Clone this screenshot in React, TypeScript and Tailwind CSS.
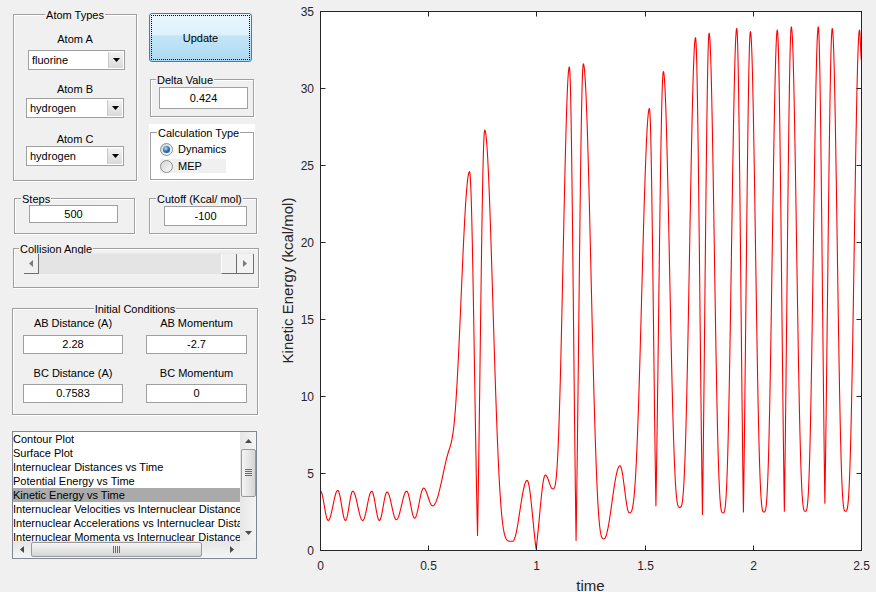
import React from "react";

type Kind = "M" | "m" | "v";
const KEYS: [number, number, Kind, number?][] = [
  [0, 3.85, "M"],
  [0.0355, 1.95, "m"],
  [0.0798, 3.9, "M"],
  [0.1153, 1.95, "m"],
  [0.149, 3.85, "M"],
  [0.195, 1.95, "m"],
  [0.2366, 3.85, "M"],
  [0.272, 1.95, "m"],
  [0.3077, 3.8, "M"],
  [0.3506, 2.0, "m"],
  [0.398, 3.85, "M"],
  [0.435, 2.1, "m"],
  [0.4765, 4.05, "M"],
  [0.518, 2.9, "m"],
  [0.6887, 24.6, "M"],
  [0.7256, 0.97, "v"],
  [0.7588, 27.3, "M", 2.5],
  [0.888, 0.6, "m"],
  [0.9548, 4.55, "M"],
  [0.9963, 0.1, "v"],
  [1.039, 4.9, "M"],
  [1.0733, 4.0, "m"],
  [1.15, 31.4, "M"],
  [1.181, 0.65, "v"],
  [1.2145, 31.6, "M"],
  [1.31, 0.76, "m"],
  [1.3838, 5.5, "M"],
  [1.4267, 2.45, "m"],
  [1.52, 28.7, "M"],
  [1.55, 2.9, "v"],
  [1.5844, 31.1, "M"],
  [1.6605, 2.8, "m"],
  [1.733, 33.3, "M"],
  [1.765, 2.34, "v"],
  [1.7957, 33.6, "M"],
  [1.86, 2.45, "m"],
  [1.9234, 33.9, "M"],
  [1.9543, 2.5, "v"],
  [1.9866, 33.7, "M"],
  [2.0494, 2.5, "m"],
  [2.111, 33.8, "M"],
  [2.1435, 2.55, "v"],
  [2.1757, 34.0, "M"],
  [2.2403, 2.55, "m"],
  [2.3003, 34.0, "M"],
  [2.3307, 3.07, "v"],
  [2.3648, 33.9, "M"],
  [2.4262, 2.55, "m"],
  [2.4908, 33.8, "M"],
  [2.5, 31.8, "m"],
];

const PL = 320.5;
const PR = 861.5;
const PT = 11.5;
const PB = 550.5;
const X = (t: number) => PL + (t / 2.5) * (PR - PL);
const Y = (v: number) => PB - (v / 35) * (PB - PT);

function ease(x: number) {
  const c = Math.min(1, Math.max(0, x));
  return (1 - Math.cos(Math.PI * c)) / 2;
}

function buildCurve(): string {
  const pts: string[] = [];
  for (let i = 0; i < KEYS.length - 1; i++) {
    const [t0, v0, k0, p0] = KEYS[i];
    const [t1, v1, k1] = KEYS[i + 1];
    const dx = X(t1) - X(t0);
    const n = Math.max(6, Math.ceil(dx * 3));
    for (let j = i === 0 ? 0 : 1; j <= n; j++) {
      const u = j / n;
      const t = t0 + (t1 - t0) * u;
      let v: number;
      if (t0 === 0.518) {
        v = 2.9 + 4.0 * ease((t - 0.518) / 0.095) + 17.7 * Math.pow(ease((t - 0.59) / 0.0987), 1.5);
      } else {
        const lowStart = v0 < v1;
        const s = lowStart ? u : 1 - u;
        const lowKind = lowStart ? k0 : k1;
        const lo = Math.min(v0, v1);
        const hi = Math.max(v0, v1);
        const p = p0 ?? (hi - lo > 10 ? 1.6 : 1);
        const g =
          lowKind === "v"
            ? 0.6 * Math.sin((Math.PI * s) / 2) + 0.4 * ((1 - Math.cos(Math.PI * s)) / 2)
            : Math.pow((1 - Math.cos(Math.PI * s)) / 2, p);
        v = lo + (hi - lo) * g;
      }
      pts.push(`${X(t).toFixed(2)},${Y(v).toFixed(2)}`);
    }
  }
  return "M" + pts.join("L");
}

const CURVE = buildCurve();

function Box({ label, labelCls, cls, children }: { label: string; labelCls: string; cls: string; children?: React.ReactNode }) {
  return (
    <div className={`border border-[#a0a0a0] shadow-[1px_1px_0_#ffffff,inset_1px_1px_0_#ffffff] ${cls}`}>
      <div className={`-mt-[7px] h-[13px] leading-[14px] w-fit px-[1px] whitespace-nowrap ${labelCls}`}>{label}</div>
      {children}
    </div>
  );
}

function Edit({ v, cls }: { v: string; cls: string }) {
  return <div className={`bg-white border border-[#a0a0a0] flex items-center justify-center ${cls}`}>{v}</div>;
}

function Drop({ v, cls }: { v: string; cls: string }) {
  return (
    <div className={`flex h-[20px] bg-white border border-[#a0a0a0] ${cls}`}>
      <div className="flex-1 pl-[3px] leading-[18px]">{v}</div>
      <div className="w-[15px] my-[1px] mr-[1px] border-l border-[#c8c8c8] bg-[linear-gradient(#f3f3f3,#dadada)] flex items-center justify-center">
        <svg width="7" height="4" viewBox="0 0 7 4">
          <path d="M0 0H7L3.5 4Z" fill="#000" />
        </svg>
      </div>
    </div>
  );
}

function Radio({ on }: { on: boolean }) {
  return (
    <div className="w-[13px] h-[13px] rounded-full border border-[#8e8f8f] bg-[linear-gradient(135deg,#d4d4d4,#fbfbfb)] flex items-center justify-center shrink-0">
      {on && <div className="w-[7px] h-[7px] rounded-full bg-[radial-gradient(circle_at_40%_35%,#b8e4fc_0%,#2a78c0_45%,#0d3e73_100%)]" />}
    </div>
  );
}

function TriUp() {
  return (
    <svg width="7" height="4" viewBox="0 0 7 4">
      <path d="M0 4H7L3.5 0Z" fill="#4a4a4a" />
    </svg>
  );
}
function TriDown() {
  return (
    <svg width="7" height="4" viewBox="0 0 7 4">
      <path d="M0 0H7L3.5 4Z" fill="#4a4a4a" />
    </svg>
  );
}
function TriLeft({ c = "#4a4a4a" }: { c?: string }) {
  return (
    <svg width="4" height="7" viewBox="0 0 4 7">
      <path d="M4 0V7L0 3.5Z" fill={c} />
    </svg>
  );
}
function TriRight({ c = "#4a4a4a" }: { c?: string }) {
  return (
    <svg width="4" height="7" viewBox="0 0 4 7">
      <path d="M0 0V7L4 3.5Z" fill={c} />
    </svg>
  );
}

const ITEMS = [
  "Contour Plot",
  "Surface Plot",
  "Internuclear Distances vs Time",
  "Potential Energy vs Time",
  "Kinetic Energy vs Time",
  "Internuclear Velocities vs Internuclear Distances",
  "Internuclear Accelerations vs Internuclear Distances",
  "Internuclear Momenta vs Internuclear Distances",
];

function LeftPanel() {
  return (
    <div className="w-[270px] shrink-0 flex flex-col">
      {/* Row 1 */}
      <div className="flex items-start">
        <Box label="Atom Types" labelCls="mx-auto bg-[#f0f0f0]" cls="ml-[13px] mt-[14px] w-[124px] h-[167px]">
          <div className="mt-[11px] h-[13px] leading-[14px] text-center">Atom A</div>
          <Drop v="fluorine" cls="mt-[5px] ml-[14px] w-[97px]" />
          <div className="mt-[12px] h-[13px] leading-[14px] text-center">Atom B</div>
          <Drop v="hydrogen" cls="mt-[3px] ml-[12px] w-[98px]" />
          <div className="mt-[14px] h-[13px] leading-[14px] text-center">Atom C</div>
          <Drop v="hydrogen" cls="mt-[1px] ml-[12px] w-[98px]" />
        </Box>
        <div className="ml-[12px] flex flex-col">
          <button className="mt-[13px] w-[103px] h-[49px] rounded-[3px] border border-[#3c7fb1] p-[1px] bg-[linear-gradient(to_bottom,#eaf6fd_0%,#dcf1fc_45%,#c4e5f7_46%,#abdaf4_100%)] text-[11px] text-black">
            <div className="h-full border border-dotted border-black flex items-center justify-center pt-[1px]">Update</div>
          </button>
          <Box label="Delta Value" labelCls="ml-[5px] bg-[#f0f0f0]" cls="mt-[17px] ml-[1px] w-[104px] h-[38px]">
            <Edit v="0.424" cls="mt-[1px] ml-[8px] w-[89px] h-[22px]" />
          </Box>
          <div className="mt-[7px] w-[106px] h-[57px] bg-white flex flex-col">
            <Box label="Calculation Type" labelCls="ml-[6px] bg-white" cls="mt-[8px] ml-[1px] w-[104px] h-[48px]">
              <div className="mt-[3px] ml-[9px] h-[14px] flex items-center">
                <Radio on={true} />
                <span className="ml-[5px] leading-[14px]">Dynamics</span>
              </div>
              <div className="mt-[3px] ml-[9px] w-[66px] h-[14px] bg-[#f0f0f0] flex items-center">
                <Radio on={false} />
                <span className="ml-[5px] leading-[14px]">MEP</span>
              </div>
            </Box>
          </div>
        </div>
      </div>

      {/* Row 2 */}
      <div className="flex items-start">
        <Box label="Steps" labelCls="ml-[6px] bg-[#f0f0f0]" cls="mt-[17px] ml-[14px] w-[121px] h-[36px]">
          <Edit v="500" cls="ml-[14px] w-[89px] h-[18px]" />
        </Box>
        <Box label="Cutoff (Kcal/ mol)" labelCls="ml-[6px] bg-[#f0f0f0]" cls="mt-[17px] ml-[14px] w-[108px] h-[36px]">
          <Edit v="-100" cls="mt-[1px] ml-[14px] w-[83px] h-[20px]" />
        </Box>
      </div>

      {/* Row 3 */}
      <Box label="Collision Angle" labelCls="ml-[5px] bg-[#f0f0f0]" cls="mt-[14px] ml-[13px] w-[246px] h-[40px]">
        <div className="-mt-[2px] ml-[10px] w-[230px] h-[21px] flex border-t border-[#e8e8e8]">
          <div className="w-[15px] h-full bg-[#f0f0f0] border-r border-b border-[#6f6f6f] flex items-center justify-center">
            <TriLeft c="#7a7a7a" />
          </div>
          <div className="flex-1 h-full bg-[#e4e4e4]" />
          <div className="w-[16px] h-full bg-[#f0f0f0] border-l border-[#ffffff] border-r border-b border-r-[#6f6f6f] border-b-[#6f6f6f]" />
          <div className="w-[17px] h-full bg-[#f3f3f3] border-r border-b border-[#6f6f6f] flex items-center justify-center">
            <TriRight c="#7a7a7a" />
          </div>
        </div>
      </Box>

      {/* Row 4 */}
      <Box label="Initial Conditions" labelCls="mx-auto bg-[#f0f0f0]" cls="mt-[20px] ml-[12px] w-[246px] h-[107px]">
        <div className="ml-[10px] flex gap-[23px]">
          <div className="w-[100px] flex flex-col">
            <div className="mt-[1px] h-[13px] leading-[14px] text-center">AB Distance (A)</div>
            <Edit v="2.28" cls="mt-[6px] h-[19px]" />
            <div className="mt-[12px] h-[13px] leading-[14px] text-center">BC Distance (A)</div>
            <Edit v="0.7583" cls="mt-[5px] h-[19px]" />
          </div>
          <div className="w-[101px] flex flex-col">
            <div className="mt-[1px] h-[13px] leading-[14px] text-center">AB Momentum</div>
            <Edit v="-2.7" cls="mt-[6px] h-[19px]" />
            <div className="mt-[12px] h-[13px] leading-[14px] text-center">BC Momentum</div>
            <Edit v="0" cls="mt-[5px] h-[19px]" />
          </div>
        </div>
      </Box>

      {/* Row 5 listbox */}
      <div className="mt-[16px] ml-[12px] w-[245px] h-[128px] border border-[#828790] bg-white flex flex-col">
        <div className="flex h-[109px]">
          <div className="w-[227px] h-full overflow-hidden">
            {ITEMS.map((it, i) => (
              <div key={it} className={`h-[14px] leading-[14px] whitespace-nowrap ${i === 4 ? "bg-[#aaaaaa]" : ""}`}>
                {it}
              </div>
            ))}
          </div>
          <div className="w-[16px] h-full bg-[linear-gradient(to_right,#e6e6e6,#f4f4f4)] flex flex-col items-center">
            <div className="h-[17px] w-full flex items-center justify-center">
              <TriUp />
            </div>
            <div className="w-[15px] h-[48px] rounded-[2px] border border-[#9a9a9a] bg-[linear-gradient(to_right,#f5f5f5,#e2e2e2_60%,#d4d4d4)] flex items-center justify-center">
              <svg width="7" height="8" viewBox="0 0 7 8">
                <path d="M0 0.5H7M0 2.5H7M0 4.5H7M0 6.5H7" stroke="#6b6b6b" strokeWidth="1" />
              </svg>
            </div>
            <div className="flex-1" />
            <div className="h-[17px] w-full flex items-center justify-center">
              <TriDown />
            </div>
          </div>
        </div>
        <div className="flex h-[17px]">
          <div className="w-[227px] h-full bg-[linear-gradient(to_bottom,#e6e6e6,#f4f4f4)] flex items-center">
            <div className="w-[17px] h-full flex items-center justify-center">
              <TriLeft />
            </div>
            <div className="ml-[1px] w-[171px] h-[15px] rounded-[2px] border border-[#9a9a9a] bg-[linear-gradient(to_bottom,#f5f5f5,#e2e2e2_60%,#d4d4d4)] flex items-center justify-center">
              <svg width="8" height="7" viewBox="0 0 8 7">
                <path d="M0.5 0V7M2.5 0V7M4.5 0V7M6.5 0V7" stroke="#6b6b6b" strokeWidth="1" />
              </svg>
            </div>
            <div className="flex-1" />
            <div className="w-[17px] h-full flex items-center justify-center">
              <TriRight />
            </div>
          </div>
          <div className="w-[16px] h-full bg-[#f0f0f0]" />
        </div>
      </div>
    </div>
  );
}

function Plot() {
  const xt = [0, 0.5, 1, 1.5, 2, 2.5];
  const yt = [0, 5, 10, 15, 20, 25, 30, 35];
  const fam = "'Liberation Sans', Arial, sans-serif";
  return (
    <svg width={606} height={592} viewBox="270 0 606 592" className="block shrink-0">
      <defs>
        <clipPath id="pa">
          <rect x={PL} y={PT} width={PR - PL} height={PB - PT} />
        </clipPath>
      </defs>
      <rect x={PL} y={PT} width={PR - PL} height={PB - PT} fill="#ffffff" />
      <path d={CURVE} fill="none" stroke="#ff0000" strokeWidth={1.1} strokeLinejoin="round" clipPath="url(#pa)" />
      <rect x={PL} y={PT} width={PR - PL} height={PB - PT} fill="none" stroke="#262626" strokeWidth={1} />
      {xt.map((t) => {
        const x = Math.round(X(t) - 0.5) + 0.5;
        return (
          <g key={"x" + t}>
            <line x1={x} x2={x} y1={PB} y2={PB - 5} stroke="#262626" />
            <line x1={x} x2={x} y1={PT} y2={PT + 5} stroke="#262626" />
            <text x={x} y={570} textAnchor="middle" fontSize={12} fill="#262626" fontFamily={fam}>
              {t}
            </text>
          </g>
        );
      })}
      {yt.map((v) => {
        const y = Math.round(Y(v) - 0.5) + 0.5;
        return (
          <g key={"y" + v}>
            <line x1={PL} x2={PL + 5} y1={y} y2={y} stroke="#262626" />
            <line x1={PR} x2={PR - 5} y1={y} y2={y} stroke="#262626" />
            <text x={314} y={y + 4.5} textAnchor="end" fontSize={12} fill="#262626" fontFamily={fam}>
              {v}
            </text>
          </g>
        );
      })}
      <text x={-280.5} y={293.3} transform="rotate(-90)" textAnchor="middle" fontSize={15} fill="#262626" fontFamily={fam}>
        Kinetic Energy (kcal/mol)
      </text>
      <text x={590.5} y={591} textAnchor="middle" fontSize={15} fill="#262626" fontFamily={fam}>
        time
      </text>
    </svg>
  );
}

export default function App() {
  return (
    <div className="w-[876px] h-[592px] bg-[#f0f0f0] flex overflow-hidden font-['Liberation_Sans',Arial,sans-serif] text-[11px] text-black">
      <LeftPanel />
      <Plot />
    </div>
  );
}
